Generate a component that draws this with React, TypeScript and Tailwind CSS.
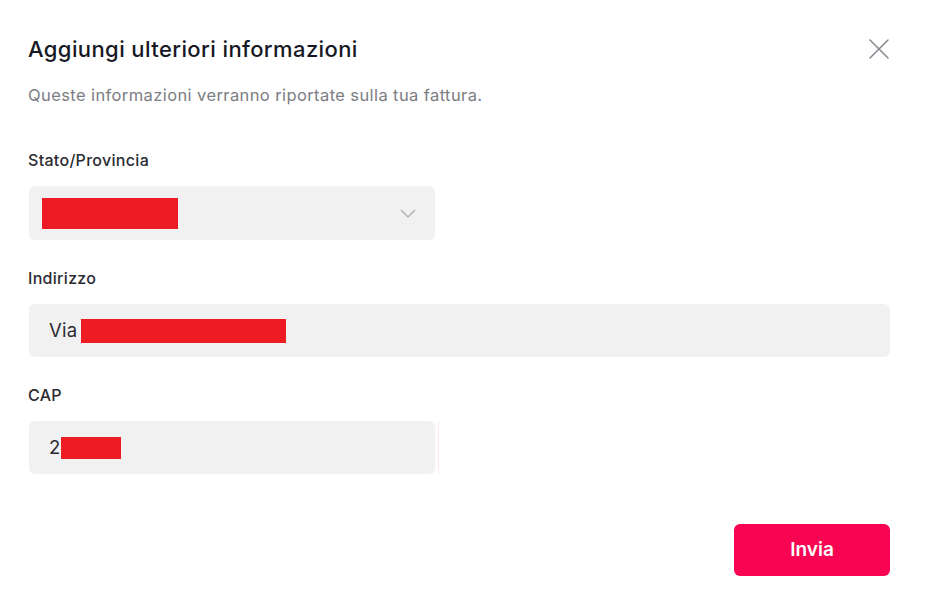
import React from "react";

export default function App() {
  return (
    <div
      className="w-[927px] h-[609px] bg-white pl-[28px] pr-[37px] pt-[34px] flex flex-col text-[#161823]"
      style={{ fontFamily: "Inter, 'Liberation Sans', Arial, sans-serif" }}
    >
      <div className="flex items-start justify-between h-[30px]">
        <h1 className="text-[22px] leading-[30px] font-medium tracking-[0.4px]">Aggiungi ulteriori informazioni</h1>
        <button className="w-[24px] h-[24px] mt-[3px] mr-[-1px] flex items-center justify-center text-[#8a8b91]">
          <svg width="22" height="22" viewBox="0 0 22 22" fill="none" stroke="currentColor" strokeWidth="1.6" strokeLinecap="round">
            <path d="M2 2 L20 20 M20 2 L2 20" />
          </svg>
        </button>
      </div>
      <p className="mt-[21px] text-[16.5px] leading-[20px] tracking-[0.4px] text-[#7c7d83]">
        Queste informazioni verranno riportate sulla tua fattura.
      </p>

      <label className="mt-[45px] text-[16px] leading-[20px] tracking-[0.3px] font-medium text-[#2a2b31]">Stato/Provincia</label>
      <div className="mt-[16px] w-[406px] ml-[1px] h-[54px] rounded-[6px] bg-[#f1f1f2] flex items-center justify-between pl-[13px] pr-[19px]">
        <div className="w-[136px] h-[31px] bg-[#ed1c24]" />
        <svg width="16" height="9" viewBox="0 0 16 9" fill="none" stroke="#a7a8ad" strokeWidth="1.2">
          <path d="M1 1 L8 8 L15 1" />
        </svg>
      </div>

      <label className="mt-[28px] text-[16px] leading-[20px] tracking-[0.3px] font-medium text-[#2a2b31]">Indirizzo</label>
      <div className="mt-[16px] ml-[1px] h-[53px] rounded-[6px] bg-[#f1f1f2] flex items-center pl-[20px]">
        <span className="text-[18.5px] tracking-[0.3px] text-[#2a2b31]">Via</span>
        <div className="ml-[3px] w-[205px] h-[24px] bg-[#ed1c24]" />
      </div>

      <label className="mt-[28px] text-[16px] leading-[20px] tracking-[0.3px] font-medium text-[#2a2b31]">CAP</label>
      <div className="mt-[16px] flex items-stretch">
        <div className="ml-[1px] w-[406px] h-[53px] rounded-[6px] bg-[#f1f1f2] flex items-center pl-[20px]">
          <span className="text-[18.5px] text-[#2a2b31]">2</span>
          <div className="ml-[1px] w-[60px] h-[22px] bg-[#ed1c24]" />
        </div>
        <div className="ml-[3px] w-[1px] bg-[#fde8ec]" />
      </div>

      <div className="mt-[50px] flex justify-end">
        <button className="w-[156px] h-[52px] rounded-[6px] bg-[#f70552] text-white text-[19px] font-semibold">
          Invia
        </button>
      </div>
    </div>
  );
}
